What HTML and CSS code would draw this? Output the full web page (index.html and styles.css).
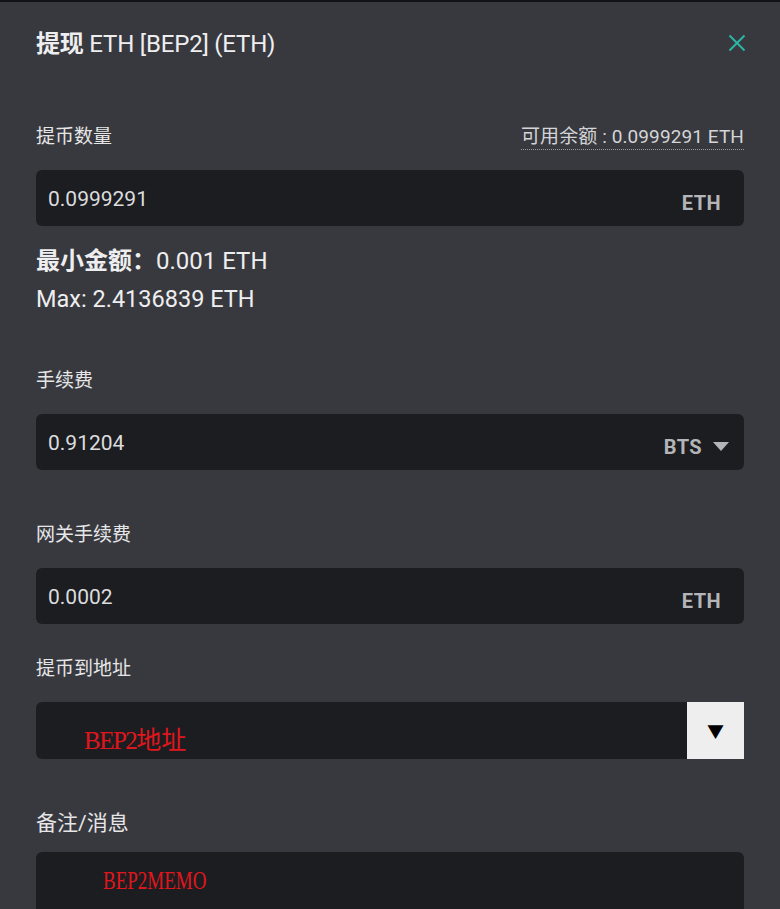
FILE: index.html
```html
<!DOCTYPE html>
<html>
<head>
<meta charset="utf-8">
<link rel="stylesheet" href="styles.css">
</head>
<body>
<div class="topbar"></div>
<div class="modal">
  <div class="header">
    <h1 class="title"><b>提现</b> ETH [BEP2] (ETH)</h1>
    <svg class="close" width="18" height="18" viewBox="0 0 18 18"><path d="M1.5 1.5 L16.5 16.5 M16.5 1.5 L1.5 16.5" stroke="#2bb5a7" stroke-width="2" fill="none"/></svg>
  </div>

  <div class="label-row first">
    <span class="label">提币数量</span>
    <span class="balance">可用余额 : 0.0999291 ETH</span>
  </div>
  <div class="field">
    <span class="value">0.0999291</span>
    <span class="unit">ETH</span>
  </div>
  <div class="minline"><b>最小金额：</b>0.001 ETH</div>
  <div class="maxline">Max: 2.4136839 ETH</div>

  <div class="label-row fee">
    <span class="label">手续费</span>
  </div>
  <div class="field">
    <span class="value">0.91204</span>
    <span class="unit">BTS <svg class="caret" width="16" height="9" viewBox="0 0 16 9"><path d="M0 0 H16 L8 9 Z" fill="#b4b5b8"/></svg></span>
  </div>

  <div class="label-row gw">
    <span class="label">网关手续费</span>
  </div>
  <div class="field">
    <span class="value">0.0002</span>
    <span class="unit">ETH</span>
  </div>

  <div class="label-row addr">
    <span class="label">提币到地址</span>
  </div>
  <div class="addr-row">
    <div class="addr-field"><span class="red addr-text"><span class="addr-lat">BEP2</span>地址</span></div>
    <div class="addr-btn">▼</div>
  </div>

  <div class="label-row memo-label">
    <span class="label big">备注/消息</span>
  </div>
  <div class="memo-field"><span class="red memo-text">BEP2MEMO</span></div>
</div>
</body>
</html>
```
FILE: styles.css
```css
html, body {
  margin: 0;
  padding: 0;
  background: #38393e;
  height: 909px;
  overflow: hidden;
}
body {
  font-family: Roboto, "Noto Sans CJK SC", sans-serif;
  color: #e6e6e8;
}
.topbar {
  height: 2px;
  background: #111215;
}
.modal {
  padding: 0 36px;
}
.header {
  display: flex;
  justify-content: space-between;
  align-items: center;
  height: 82px;
  margin-top: -2px;
}
.title {
  margin: 0;
  font-size: 24px;
  font-weight: 400;
  color: #eeeef0;
  letter-spacing: -0.2px;
}
.title b {
  font-weight: 700;
}
.close {
  margin-right: -2px;
  margin-top: 4px;
}
.label-row {
  display: flex;
  justify-content: space-between;
  align-items: flex-end;
}
.label-row.first {
  margin-top: 40px;
  height: 30px;
}
.label {
  font-size: 19px;
  color: #e6e6e8;
  line-height: 30px;
}
.label.big {
  font-size: 21px;
}
.balance {
  font-size: 19px;
  color: #d4d5d8;
  line-height: 24px;
  border-bottom: 1px dotted #9a9ba0;
  margin-bottom: 2px;
  letter-spacing: 0.1px;
}
.field {
  margin-top: 18px;
  height: 56px;
  background: #1c1d21;
  border-radius: 6px;
  display: flex;
  justify-content: space-between;
  align-items: center;
  padding: 0 23px 0 12px;
  box-sizing: border-box;
}
.value {
  font-size: 21px;
  color: #dcdcde;
  margin-top: 1px;
}
.unit {
  font-size: 20px;
  font-weight: 700;
  color: #b4b5b8;
  margin-top: 10px;
  display: flex;
  align-items: center;
  gap: 11px;
  letter-spacing: 0.4px;
}
.caret {
  margin-right: -8px;
  margin-top: -2px;
}
.minline {
  margin-top: 20px;
  font-size: 24px;
  line-height: 30px;
  color: #eeeef0;
}
.minline b {
  font-weight: 700;
}
.maxline {
  margin-top: 8px;
  font-size: 23.5px;
  line-height: 30px;
  color: #eeeef0;
}
.label-row.fee {
  margin-top: 52px;
}
.label-row.gw {
  margin-top: 50px;
}
.label-row.addr {
  margin-top: 30px;
}
.addr-row {
  margin-top: 18px;
  display: flex;
  height: 57px;
}
.addr-field {
  flex: 1;
  background: #1c1d21;
  border-radius: 6px 0 0 6px;
}
.addr-btn {
  width: 57px;
  background: #eeeeee;
  color: #000;
  display: flex;
  justify-content: center;
  align-items: center;
  font-size: 17px;
}
.red {
  font-family: "Liberation Serif", "Noto Sans CJK SC", serif;
  color: #e0161c;
  display: block;
}
.addr-text {
  font-size: 25px;
  padding: 25px 0 0 48px;
  line-height: 28px;
}
.addr-lat {
  letter-spacing: -1.5px;
}
.label-row.memo-label {
  margin-top: 49px;
}
.memo-field {
  margin-top: 14px;
  height: 80px;
  background: #1c1d21;
  border-radius: 6px 6px 0 0;
}
.memo-text {
  font-size: 25px;
  padding: 15px 0 0 67px;
  line-height: 28px;
  transform: scaleX(0.76);
  transform-origin: 67px 0;
}
```
